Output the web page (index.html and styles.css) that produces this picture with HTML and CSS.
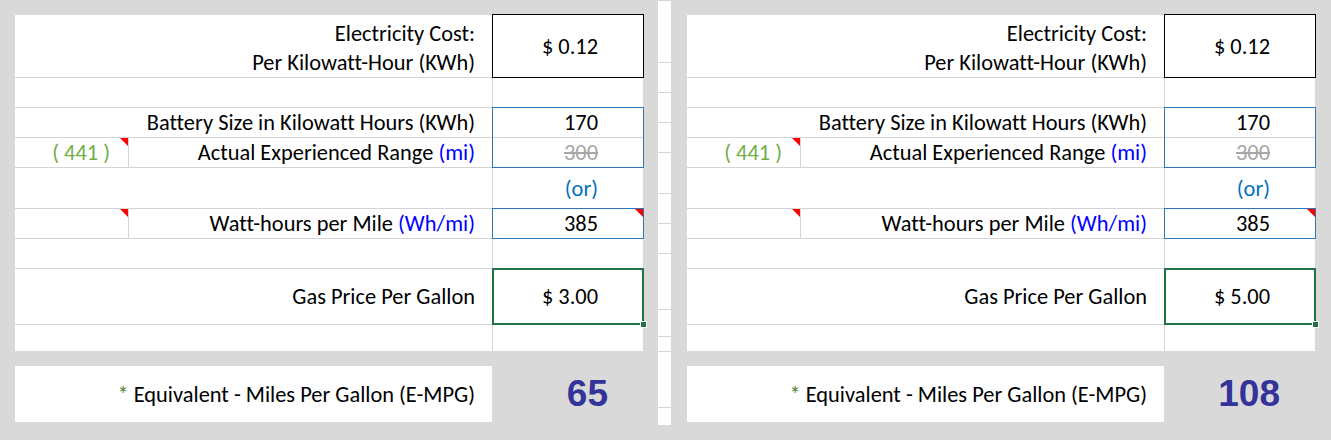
FILE: index.html
```html
<!DOCTYPE html>
<html>

<head>
    <link rel="stylesheet" href="styles.css">
</head>

<body>
    <div class="page">
        <div class="panel">
            <div class="sheet">
                <div class="label wide two-line">Electricity Cost:<br>Per Kilowatt-Hour (KWh)</div>
                <div class="value box-black">$ 0.12</div>

                <div class="wide"></div>
                <div class="value"></div>

                <div class="label wide">Battery Size in Kilowatt Hours (KWh)</div>
                <div class="pair box-blue">
                    <div class="value">170</div>
                    <div class="value old">300</div>
                </div>

                <div class="note flag">( 441 )</div>
                <div class="label">Actual Experienced Range&nbsp;<span class="unit">(mi)</span></div>

                <div class="wide"></div>
                <div class="value or">(or)</div>

                <div class="flag"></div>
                <div class="label">Watt-hours per Mile&nbsp;<span class="unit">(Wh/mi)</span></div>
                <div class="value box-blue flag">385</div>

                <div class="wide"></div>
                <div class="value"></div>

                <div class="label wide">Gas Price Per Gallon</div>
                <div class="value selected">$ 3.00</div>

                <div class="wide"></div>
                <div class="value"></div>
            </div>
            <div class="result">
                <div class="label result-label"><span class="star">*</span>&nbsp;Equivalent - Miles Per Gallon (E-MPG)</div>
                <div class="mpg">65</div>
            </div>
        </div>

        <div class="strip">
            <div></div><div></div><div></div><div></div><div></div><div></div><div></div>
            <div></div><div></div><div></div><div></div><div></div><div></div>
        </div>

        <div class="panel">
            <div class="sheet">
                <div class="label wide two-line">Electricity Cost:<br>Per Kilowatt-Hour (KWh)</div>
                <div class="value box-black">$ 0.12</div>

                <div class="wide"></div>
                <div class="value"></div>

                <div class="label wide">Battery Size in Kilowatt Hours (KWh)</div>
                <div class="pair box-blue">
                    <div class="value">170</div>
                    <div class="value old">300</div>
                </div>

                <div class="note flag">( 441 )</div>
                <div class="label">Actual Experienced Range&nbsp;<span class="unit">(mi)</span></div>

                <div class="wide"></div>
                <div class="value or">(or)</div>

                <div class="flag"></div>
                <div class="label">Watt-hours per Mile&nbsp;<span class="unit">(Wh/mi)</span></div>
                <div class="value box-blue flag">385</div>

                <div class="wide"></div>
                <div class="value"></div>

                <div class="label wide">Gas Price Per Gallon</div>
                <div class="value selected">$ 5.00</div>

                <div class="wide"></div>
                <div class="value"></div>
            </div>
            <div class="result">
                <div class="label result-label"><span class="star">*</span>&nbsp;Equivalent - Miles Per Gallon (E-MPG)</div>
                <div class="mpg">108</div>
            </div>
        </div>
    </div>
</body>

</html>
```

FILE: styles.css
```css
body {
    margin: 0;
    background: #d9d9d9;
    font-family: Calibri, Carlito, 'Lato', sans-serif;
    font-size: 22.4px;
    font-variant-ligatures: none;
    color: #000;
}

.page {
    display: flex;
    padding-left: 15px;
    height: 440px;
    overflow: hidden;
}

.panel {
    width: 628px;
    padding-top: 15px;
}

.sheet {
    display: grid;
    grid-template-columns: 113px 363px 150px;
    grid-template-rows: 62px 29px 29px 29px 40px 29px 29px 55px 26px;
    gap: 1px;
    background: #d4d4d4;
}

.sheet > div {
    background: #fff;
    position: relative;
}

.wide {
    grid-column: span 2;
}

.label {
    display: flex;
    align-items: center;
    justify-content: flex-end;
    padding-right: 17px;
    text-align: right;
    white-space: nowrap;
}

.two-line {
    line-height: 29px;
    padding-top: 3px;
}

.unit {
    color: #0000ff;
}

.value {
    display: flex;
    align-items: center;
    justify-content: flex-end;
    padding-right: 45px;
    background: #fff;
    position: relative;
}

.old {
    color: #a6a6a6;
    text-decoration: line-through;
}

.or {
    color: #0070c0;
}

.note {
    display: flex;
    align-items: center;
    justify-content: flex-end;
    padding-right: 18px;
    color: #70ad47;
}

.pair {
    grid-row: span 2;
    display: flex;
    flex-direction: column;
}

.pair .value {
    height: 29px;
}

.pair .value:first-child {
    height: 30px;
    border-bottom: 1px solid #d4d4d4;
    box-sizing: border-box;
}

.box-black {
    outline: 1px solid #000;
}

.box-blue {
    outline: 1px solid #2e75b6;
}

.selected {
    outline: 2px solid #217346;
    outline-offset: -1px;
}

.selected::after {
    content: "";
    position: absolute;
    right: -4px;
    bottom: -4px;
    width: 5px;
    height: 5px;
    background: #217346;
    border: 1px solid #fff;
    z-index: 2;
}

/* comment marker in the top right corner */
.flag::before {
    content: "";
    position: absolute;
    top: 0;
    right: 0;
    border-left: 8px solid transparent;
    border-top: 8px solid #ff0000;
    z-index: 2;
}

.result {
    display: flex;
    margin-top: 15px;
    height: 56px;
}

.result-label {
    width: 477px;
    box-sizing: border-box;
    background: #fff;
}

.star {
    color: #548235;
}

.mpg {
    flex: 1;
    display: flex;
    align-items: center;
    justify-content: flex-end;
    padding-right: 35px;
    font-family: 'Liberation Sans', Arial, sans-serif;
    font-weight: bold;
    font-size: 37px;
    color: #333399;
}

.strip {
    width: 13px;
    margin: -15px 16px 0 15px;
    display: grid;
    grid-template-rows: 15px 61px 29px 29px 29px 40px 29px 29px 55px 26px 14px 55px 17px;
    gap: 1px;
    background: #d4d4d4;
    height: 440px;
}

.strip > div {
    background: #fff;
}
```
